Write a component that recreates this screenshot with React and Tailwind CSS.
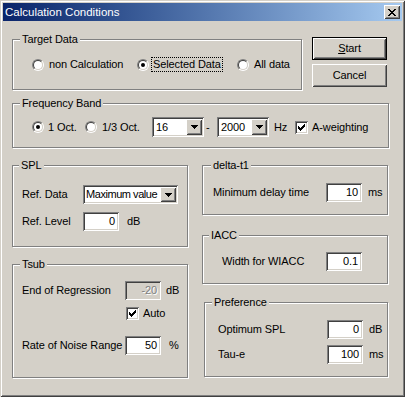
import React from "react";

const sunken =
  "shadow-[inset_1px_1px_0_#808080,inset_-1px_-1px_0_#ffffff,inset_2px_2px_0_#404040,inset_-2px_-2px_0_#d4d0c8]";
const raised =
  "shadow-[inset_1px_1px_0_#ffffff,inset_-1px_-1px_0_#404040,inset_2px_2px_0_#d4d0c8,inset_-2px_-2px_0_#808080]";
const etched =
  "relative border border-[#808080] shadow-[inset_1px_1px_0_#ffffff,1px_1px_0_#ffffff]";

function Legend({ children, className }) {
  return (
    <span
      className={`absolute -top-[7px] px-[2px] bg-[#d4d0c8] leading-[13px] whitespace-nowrap ${className}`}
    >
      {children}
    </span>
  );
}

function Radio({ checked }) {
  return (
    <span className="flex w-[12px] h-[12px] shrink-0 rounded-full border border-t-[#808080] border-l-[#808080] border-b-white border-r-white">
      <span className="flex w-full h-full items-center justify-center rounded-full border border-t-[#404040] border-l-[#404040] border-b-[#d4d0c8] border-r-[#d4d0c8] bg-white">
        {checked && <span className="w-[4px] h-[4px] rounded-full bg-black" />}
      </span>
    </span>
  );
}

function Check() {
  const px = [
    [6, 0],
    [5, 1], [6, 1],
    [0, 2], [4, 2], [5, 2], [6, 2],
    [0, 3], [1, 3], [3, 3], [4, 3], [5, 3],
    [0, 4], [1, 4], [2, 4], [3, 4], [4, 4],
    [1, 5], [2, 5], [3, 5],
    [2, 6],
  ];
  return (
    <span className={`flex w-[13px] h-[13px] shrink-0 items-center justify-center bg-white ${sunken}`}>
      <svg width="7" height="7" viewBox="0 0 7 7" shapeRendering="crispEdges">
        {px.map(([x, y], i) => (
          <rect key={i} x={x} y={y} width="1" height="1" fill="#000" />
        ))}
      </svg>
    </span>
  );
}

function Arrow() {
  return (
    <span className={`flex w-[16px] h-full shrink-0 items-center justify-center bg-[#d4d0c8] ${raised}`}>
      <svg width="7" height="4" viewBox="0 0 7 4" shapeRendering="crispEdges">
        <rect x="0" y="0" width="7" height="1" fill="#000" />
        <rect x="1" y="1" width="5" height="1" fill="#000" />
        <rect x="2" y="2" width="3" height="1" fill="#000" />
        <rect x="3" y="3" width="1" height="1" fill="#000" />
      </svg>
    </span>
  );
}

function Combo({ className, textClass = "", children }) {
  return (
    <div className={`flex shrink-0 bg-white p-[2px] ${sunken} ${className}`}>
      <span className={`flex-1 pl-[2px] leading-[15px] self-center whitespace-nowrap overflow-hidden ${textClass}`}>
        {children}
      </span>
      <Arrow />
    </div>
  );
}

function Input({ children, disabled }) {
  return (
    <div
      className={`flex w-[36px] h-[19px] shrink-0 items-center justify-end pr-[4px] ${sunken} ${
        disabled ? "bg-[#d4d0c8] text-[#808080] [text-shadow:1px_1px_0_#ffffff]" : "bg-white"
      }`}
    >
      {children}
    </div>
  );
}

export default function App() {
  return (
    <div className="w-[405px] h-[397px] bg-[#d4d0c8] text-black text-[11px] leading-[13px] tracking-[-0.1px] font-['Liberation_Sans',Arial,sans-serif] shadow-[inset_1px_1px_0_#d4d0c8,inset_-1px_-1px_0_#404040,inset_2px_2px_0_#ffffff,inset_-2px_-2px_0_#808080] overflow-hidden">
      {/* Title bar */}
      <div className="mx-[3px] mt-[3px] h-[18px] flex items-center justify-between pl-[2px] pr-[2px] bg-linear-to-r from-[#0a246a] to-[#a6caf0]">
        <span className="text-white text-[11.5px] leading-[14px] tracking-normal">Calculation Conditions</span>
        <span className={`flex w-[16px] h-[14px] items-center justify-center bg-[#d4d0c8] ${raised}`}>
          <svg width="8" height="7" viewBox="0 0 8 7" shapeRendering="crispEdges">
            {[0, 1, 2, 3, 4, 5, 6].map((i) => (
              <React.Fragment key={i}>
                <rect x={i} y={i} width="2" height="1" fill="#000" />
                <rect x={6 - i} y={i} width="2" height="1" fill="#000" />
              </React.Fragment>
            ))}
          </svg>
        </span>
      </div>

      <div className="pl-[12px]">
        {/* Row 1 */}
        <div className="flex items-start mt-[16px]">
          <div className={`${etched} mt-[2px] w-[290px] h-[51px]`}>
            <Legend className="left-[7px]">Target Data</Legend>
            <div className="flex items-center pl-[19px] pt-[17px]">
              <div className="flex items-center w-[105px]">
                <Radio />
                <span className="ml-[5px] whitespace-nowrap">non Calculation</span>
              </div>
              <div className="flex items-center w-[100px]">
                <Radio checked />
                <span className="ml-[2px] px-[1px] border border-dotted border-black whitespace-nowrap">Selected Data</span>
              </div>
              <div className="flex items-center">
                <Radio />
                <span className="ml-[5px] whitespace-nowrap">All data</span>
              </div>
            </div>
          </div>
          <div className="flex flex-col ml-[10px] gap-[4px]">
            <div className="w-[75px] h-[23px] border border-black">
              <div className={`flex w-full h-full items-center justify-center bg-[#d4d0c8] ${raised}`}>
                <span>
                  <span className="underline underline-offset-1">S</span>tart
                </span>
              </div>
            </div>
            <div className={`flex w-[75px] h-[23px] items-center justify-center bg-[#d4d0c8] ${raised}`}>
              Cancel
            </div>
          </div>
        </div>

        {/* Row 2 */}
        <div className={`${etched} mt-[13px] w-[377px] h-[45px]`}>
          <Legend className="left-[7px]">Frequency Band</Legend>
          <div className="flex items-center pl-[19px] pt-[13px]">
            <div className="flex items-center w-[53px]">
              <Radio checked />
              <span className="ml-[4px] whitespace-nowrap">1 Oct.</span>
            </div>
            <div className="flex items-center w-[67px]">
              <Radio />
              <span className="ml-[5px] whitespace-nowrap">1/3 Oct.</span>
            </div>
            <Combo className="w-[52px] h-[20px]">16</Combo>
            <span className="w-[13px] pl-[2px]">-</span>
            <Combo className="w-[52px] h-[20px]">2000</Combo>
            <span className="ml-[5px] w-[21px]">Hz</span>
            <Check />
            <span className="ml-[4px] whitespace-nowrap">A-weighting</span>
          </div>
        </div>

        {/* Row 3 */}
        <div className="flex items-start mt-[17px]">
          {/* Left column */}
          <div className="flex flex-col w-[176px]">
            <div className={`${etched} w-[176px] h-[82px]`}>
              <Legend className="left-[6px]">SPL</Legend>
              <div className="flex flex-col pl-[9px] pt-[19px]">
                <div className="flex items-center h-[19px]">
                  <span className="w-[61px] whitespace-nowrap">Ref. Data</span>
                  <Combo className="w-[95px] h-[19px]" textClass="tracking-[-0.45px] !pl-[1px]">
                    Maximum value
                  </Combo>
                </div>
                <div className="flex items-center h-[19px] mt-[8px]">
                  <span className="w-[61px] whitespace-nowrap">Ref. Level</span>
                  <Input>0</Input>
                  <span className="ml-[8px]">dB</span>
                </div>
              </div>
            </div>

            <div className={`${etched} mt-[17px] w-[176px] h-[114px]`}>
              <Legend className="left-[7px]">Tsub</Legend>
              <div className="flex flex-col pl-[9px] pt-[16px]">
                <div className="flex items-center h-[19px]">
                  <span className="w-[103px] whitespace-nowrap">End of Regression</span>
                  <Input disabled>-20</Input>
                  <span className="ml-[5px]">dB</span>
                </div>
                <div className="flex items-center h-[13px] mt-[7px] pl-[104px]">
                  <Check />
                  <span className="ml-[4px]">Auto</span>
                </div>
                <div className="flex items-center h-[19px] mt-[16px]">
                  <span className="w-[103px] whitespace-nowrap">Rate of Noise Range</span>
                  <Input>50</Input>
                  <span className="ml-[8px]">%</span>
                </div>
              </div>
            </div>
          </div>

          {/* Right column */}
          <div className="flex flex-col ml-[14px]">
            <div className={`${etched} w-[186px] h-[50px]`}>
              <Legend className="left-[8px]">delta-t1</Legend>
              <div className="flex items-center pl-[10px] pt-[17px] h-[36px]">
                <span className="w-[113px] whitespace-nowrap">Minimum delay time</span>
                <Input>10</Input>
                <span className="ml-[6px]">ms</span>
              </div>
            </div>

            <div className={`${etched} mt-[20px] w-[186px] h-[49px]`}>
              <Legend className="left-[6px]">IACC</Legend>
              <div className="flex items-center pl-[19px] pt-[16px] h-[35px]">
                <span className="w-[104px] whitespace-nowrap">Width for WIACC</span>
                <Input>0.1</Input>
              </div>
            </div>

            <div className={`${etched} mt-[18px] ml-[2px] w-[184px] h-[75px]`}>
              <Legend className="left-[7px]">Preference</Legend>
              <div className="flex flex-col pl-[13px] pt-[17px]">
                <div className="flex items-center h-[19px]">
                  <span className="w-[109px] whitespace-nowrap">Optimum SPL</span>
                  <Input>0</Input>
                  <span className="ml-[6px]">dB</span>
                </div>
                <div className="flex items-center h-[19px] mt-[6px]">
                  <span className="w-[109px] whitespace-nowrap">Tau-e</span>
                  <Input>100</Input>
                  <span className="ml-[6px]">ms</span>
                </div>
              </div>
            </div>
          </div>
        </div>
      </div>
    </div>
  );
}
